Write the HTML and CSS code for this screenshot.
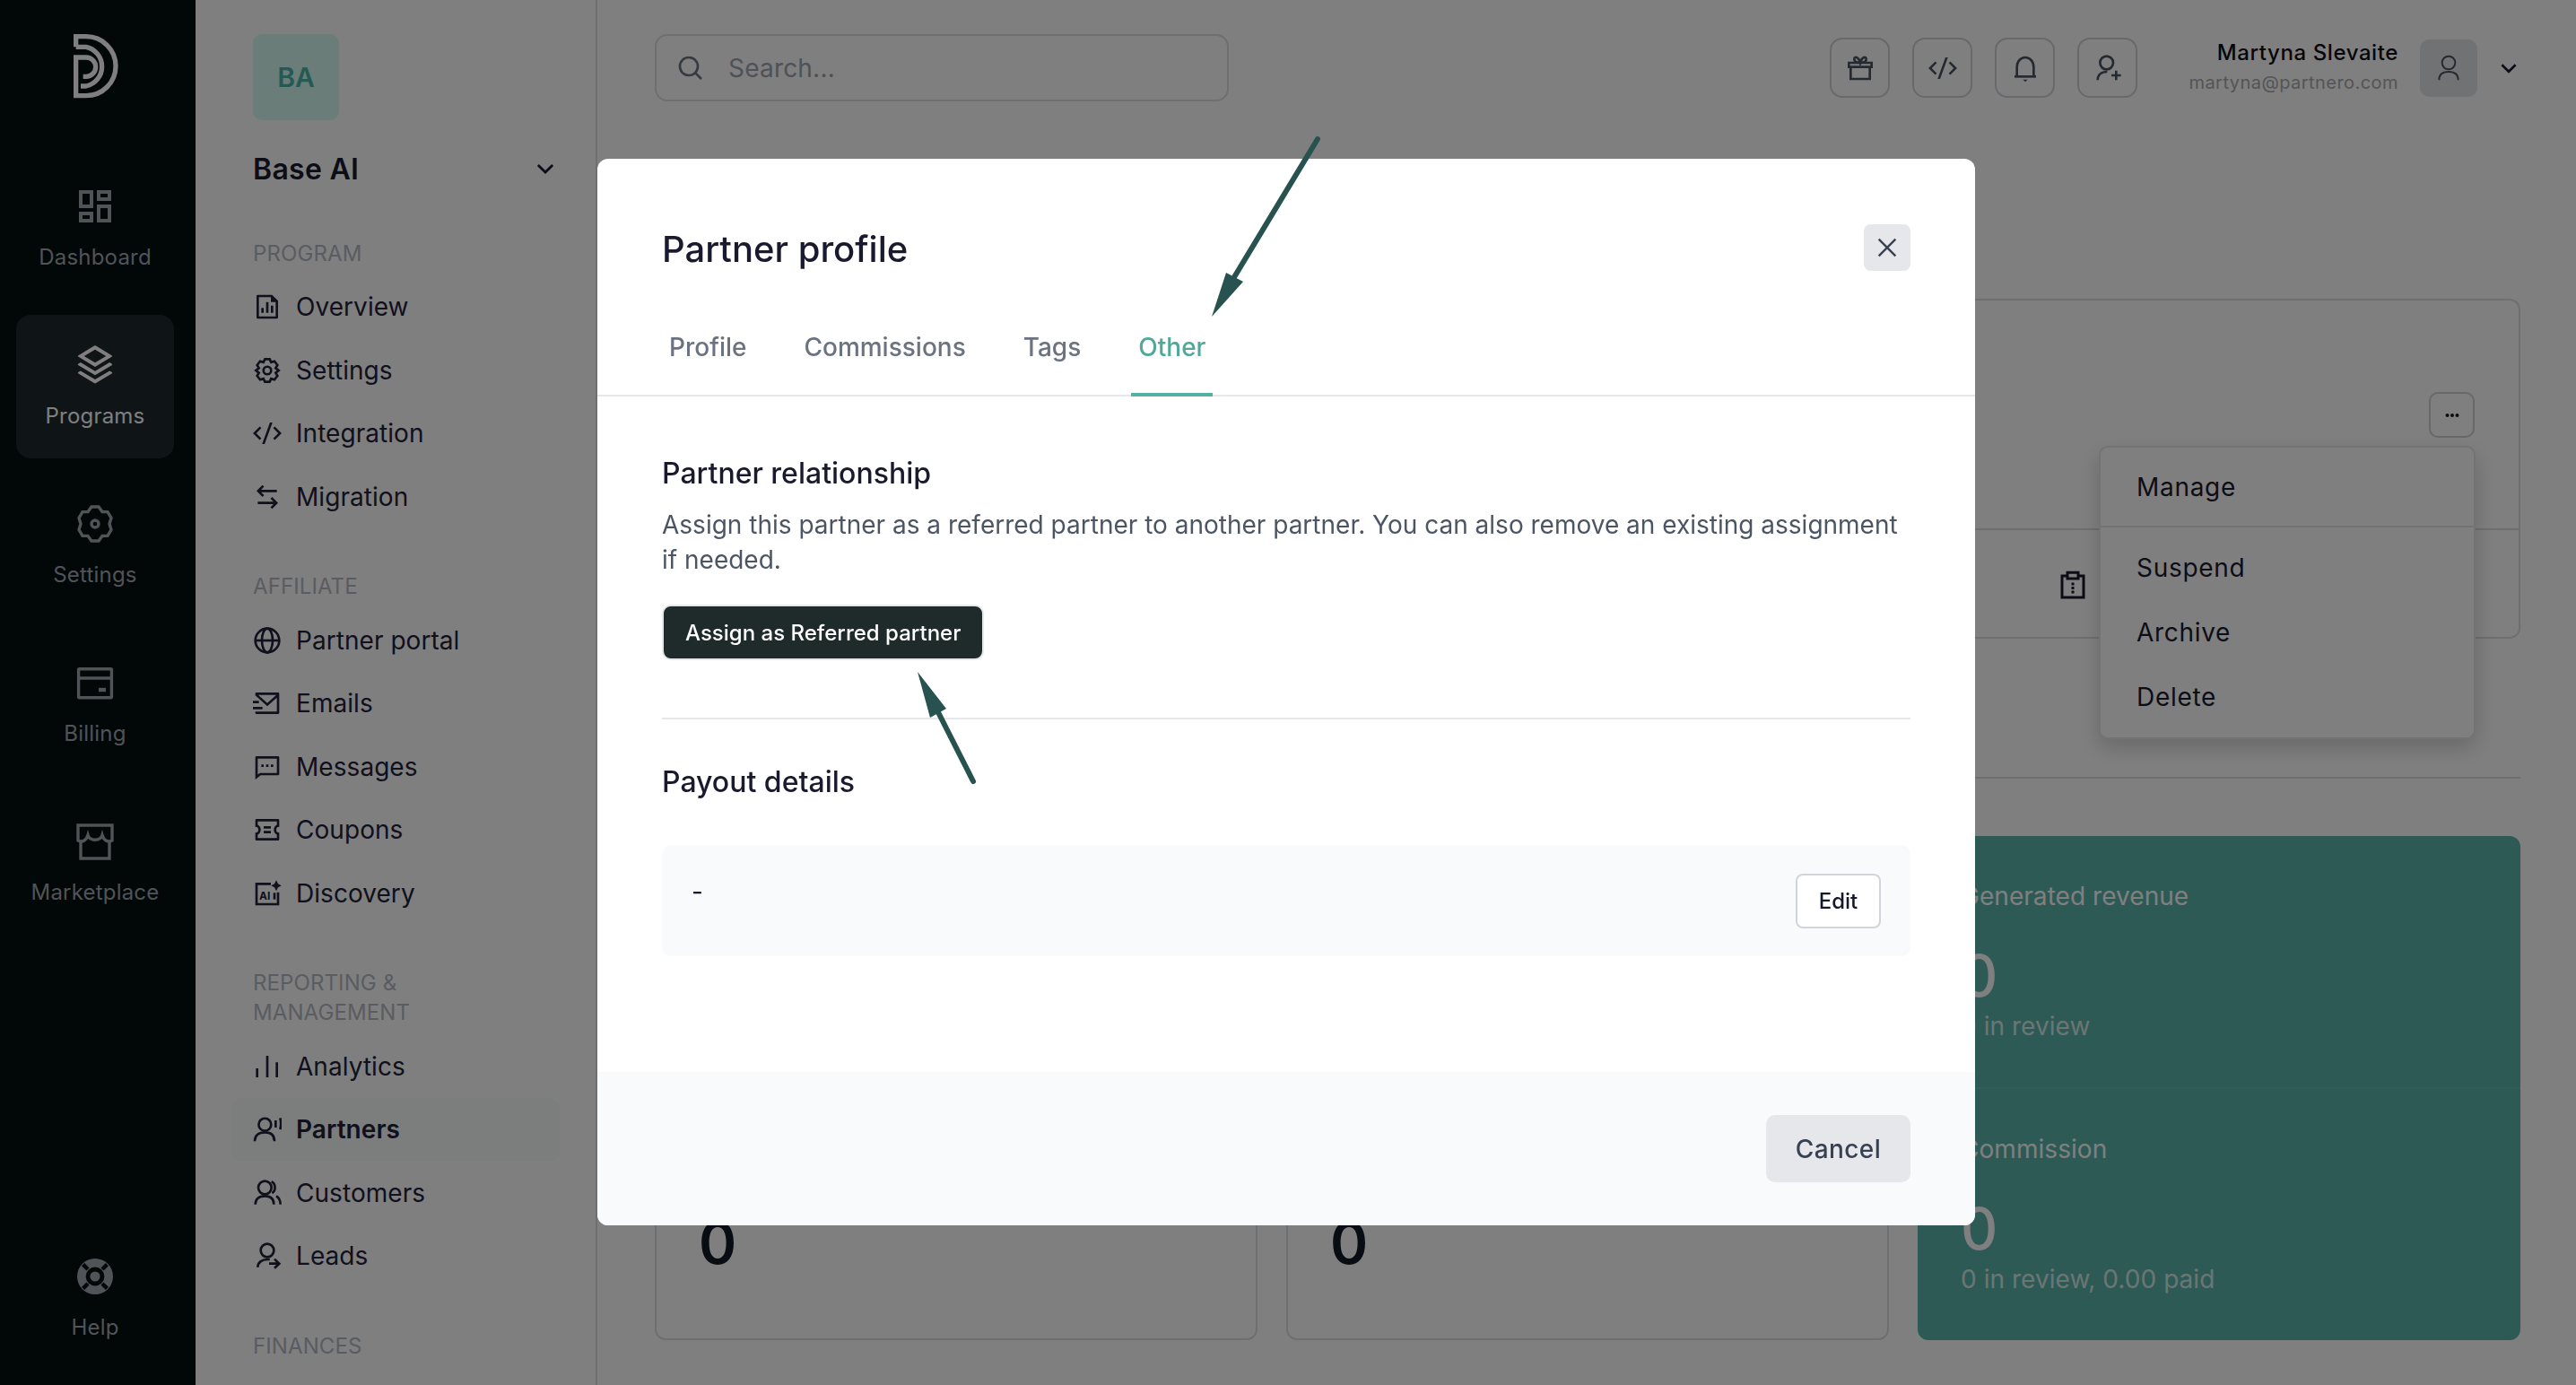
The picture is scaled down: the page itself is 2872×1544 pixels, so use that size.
FILE: index.html
```html
<!DOCTYPE html>
<html lang="en">
<head>
<meta charset="utf-8">
<title>Partner profile</title>
<link rel="stylesheet" href="styles.css">
</head>
<body>
<div class="app">
  <nav class="rail">
    <svg class="logo" viewBox="0 0 300 300"><path d="M74 97V62H108A99 99 0 0 1 108 260H74V132H108A32 32 0 0 1 108 196H98"/><path d="M74 97H108A67 67 0 0 1 108 228H90"/></svg>
    <a class="rail-item">
      <svg class="rail-icon fill" viewBox="0 0 24 24"><path d="M13 21V11h8v10h-8zM3 13V3h8v10H3zm2-2h4V5H5v6zM3 21v-6h8v6H3zm2-2h4v-2H5v2zm10 0h4v-6h-4v6zM13 3h8v6h-8V3zm2 2v2h4V5h-4z" fill-rule="evenodd"/></svg>
      <span>Dashboard</span>
    </a>
    <a class="rail-item active">
      <svg class="rail-icon fill" viewBox="0 0 24 24"><path d="M20.083 15.2l1.202.721a.5.5 0 0 1 0 .858l-8.77 5.262a1 1 0 0 1-1.03 0l-8.77-5.262a.5.5 0 0 1 0-.858l1.202-.721L12 20.05l8.083-4.85zm0-4.7l1.202.721a.5.5 0 0 1 0 .858L12 17.65l-9.285-5.571a.5.5 0 0 1 0-.858l1.202-.721L12 15.35l8.083-4.85zm-7.569-9.191l8.771 5.262a.5.5 0 0 1 0 .858L12 13 2.715 7.429a.5.5 0 0 1 0-.858l8.77-5.262a1 1 0 0 1 1.03 0zM12 3.332L5.887 7 12 10.668 18.113 7 12 3.332z"/></svg>
      <span>Programs</span>
    </a>
    <a class="rail-item">
      <svg class="rail-icon line" viewBox="0 0 24 24"><path d="M10 2.500 14 2.500 16 5.300 19 5.300 21 8.700 20 12 21 15.300 19 18.700 16 18.700 14 21.500H10L8 18.700 5 18.700 3 15.300 4 12 3 8.700 5 5.300 8 5.300Z"/><circle cx="12" cy="12" r="2"/></svg>
      <span>Settings</span>
    </a>
    <a class="rail-item">
      <svg class="rail-icon line" viewBox="0 0 24 24"><rect x="2.800" y="4.400" width="18.400" height="16" rx=".5"/><path d="M2.800 9.500H21.200"/><path class="thick" d="M14 16H18"/></svg>
      <span>Billing</span>
    </a>
    <a class="rail-item">
      <svg class="rail-icon line" viewBox="0 0 24 24"><path d="M4 12V21.500H20V12"/><path d="M2.500 3H21.500V11.500C19.500 12.500 17 12 16 8.500 15 12 9 12 8 8.500 7 12 4.500 12.500 2.500 11.500Z"/></svg>
      <span>Marketplace</span>
    </a>
    <a class="rail-item help">
      <svg class="rail-icon fill" viewBox="0 0 24 24"><circle cx="12" cy="12" r="10"/><circle class="hole" cx="12" cy="12" r="5.200"/><circle cx="12" cy="12" r="2.800"/><path class="notch" d="M5.300 5.300 8 8M18.700 5.300 16 8M5.300 18.700 8 16M18.700 18.700 16 16"/></svg>
      <span>Help</span>
    </a>
  </nav>

  <aside class="sidebar">
    <div class="org-badge">BA</div>
    <div class="org-row">
      <span class="org-name">Base AI</span>
      <svg class="org-chev line" viewBox="0 0 24 24"><path d="M5 8.500 12 15.500 19 8.500"/></svg>
    </div>

    <div class="nav-label first">PROGRAM</div>
    <a class="nav-item"><svg class="nav-icon fill" viewBox="0 0 24 24"><path d="M15 4H5v16h14V8h-4V4zM3 2.992C3 2.444 3.447 2 3.999 2H16l5 5v13.993A1 1 0 0 1 20.007 22H3.993A1 1 0 0 1 3 21.008V2.992zM11 8h2v9h-2V8zm4 3h2v6h-2v-6zm-8 2h2v4H7v-4z"/></svg>Overview</a>
    <a class="nav-item"><svg class="nav-icon line" viewBox="0 0 24 24"><path d="M10 2.500H14L15.200 5.100 18 4.300 20.500 7.500 19 10 21.500 12 19 14 20.500 16.500 18 19.700 15.200 18.900 14 21.500H10L8.800 18.900 6 19.700 3.500 16.500 5 14 2.500 12 5 10 3.500 7.500 6 4.300 8.800 5.100Z"/><circle cx="12" cy="12" r="3.200"/></svg>Settings</a>
    <a class="nav-item"><svg class="nav-icon fill" viewBox="0 0 24 24"><path d="M24 12l-5.657 5.657-1.414-1.414L21.172 12l-4.243-4.243 1.414-1.414L24 12zM2.828 12l4.243 4.243-1.414 1.414L0 12l5.657-5.657L7.070 7.757 2.828 12zm6.960 9H7.660l6.552-18h2.128L9.788 21z"/></svg>Integration</a>
    <a class="nav-item"><svg class="nav-icon fill" viewBox="0 0 24 24"><path d="M16.050 12.050L21 17l-4.950 4.950-1.414-1.414 2.536-2.537L4 18v-2h13.172l-2.536-2.536 1.414-1.414zm-8.100-10l1.414 1.414L6.828 6 20 6v2H6.828l2.536 2.536L7.950 11.950 3 7l4.950-4.950z"/></svg>Migration</a>

    <div class="nav-label">AFFILIATE</div>
    <a class="nav-item"><svg class="nav-icon line" viewBox="0 0 24 24"><circle cx="12" cy="12" r="10"/><ellipse cx="12" cy="12" rx="4.500" ry="10"/><path d="M2 12H22"/></svg>Partner portal</a>
    <a class="nav-item"><svg class="nav-icon fill" viewBox="0 0 24 24"><path d="M22 20.007a1 1 0 0 1-.992.993H2.992A.993.993 0 0 1 2 20.007V19h18V7.300l-8 7.200-10-9V4a1 1 0 0 1 1-1h18a1 1 0 0 1 1 1v16.007zM4.434 5L12 11.810 19.566 5H4.434zM0 15h8v2H0v-2zm0-5h5v2H0v-2z"/></svg>Emails</a>
    <a class="nav-item"><svg class="nav-icon fill" viewBox="0 0 24 24"><path d="M6.455 19L2 22.500V4a1 1 0 0 1 1-1h18a1 1 0 0 1 1 1v14a1 1 0 0 1-1 1H6.455zm-.692-2H20V5H4v13.385L5.763 17zM11 10h2v2h-2v-2zm-4 0h2v2H7v-2zm8 0h2v2h-2v-2z"/></svg>Messages</a>
    <a class="nav-item"><svg class="nav-icon fill" viewBox="0 0 24 24"><path d="M2 9.500V4a1 1 0 0 1 1-1h18a1 1 0 0 1 1 1v5.500a2.500 2.500 0 1 0 0 5V20a1 1 0 0 1-1 1H3a1 1 0 0 1-1-1v-5.500a2.500 2.500 0 1 0 0-5zm2-1.532a4.500 4.500 0 0 1 0 8.064V19h16v-2.968a4.500 4.500 0 0 1 0-8.064V5H4v2.968zM9 9h6v2H9V9zm0 4h6v2H9v-2z"/></svg>Coupons</a>
    <a class="nav-item"><svg class="nav-icon line" viewBox="0 0 24 24"><path d="M15 4H3V21H21V11"/><path class="solid" d="M19.500 1 21 4 23.800 5.500 21 7 19.500 10 18 7 15.200 5.500 18 4Z"/><text class="ai-glyph" x="5.200" y="17.200">AI</text><path d="M18 11.500V17"/></svg>Discovery</a>

    <div class="nav-label">REPORTING &amp; MANAGEMENT</div>
    <a class="nav-item"><svg class="nav-icon line" viewBox="0 0 24 24"><path d="M3.500 21V13.500M12 21V3M20 21V8.500"/></svg>Analytics</a>
    <a class="nav-item current"><svg class="nav-icon line" viewBox="0 0 24 24"><circle cx="10" cy="8" r="5.200"/><path d="M1.500 22C1.500 17 5 14.500 10 14.500 15 14.500 18 17 18 22"/><path d="M19 4.500V10.500M22.700 2.500C23.600 5.500 23.600 9 22.700 12"/></svg>Partners</a>
    <a class="nav-item"><svg class="nav-icon line" viewBox="0 0 24 24"><circle cx="10" cy="7.500" r="5.500"/><path d="M2 21.500C2 17 5 14.500 10 14.500 15 14.500 17.500 17 17.500 21.500"/><path d="M15.500 2.500C19 4 19.500 10 16 12M19.500 14.500C22 16 23 18.500 23 21.500"/></svg>Customers</a>
    <a class="nav-item"><svg class="nav-icon line" viewBox="0 0 24 24"><circle cx="12" cy="7.500" r="5.500"/><path d="M4 21.500C4 17.500 7.500 15 12 15H14"/><path d="M13.500 18.500H21.500M18 14.700 22 18.500 18 22.300"/></svg>Leads</a>

    <div class="nav-label">FINANCES</div>
  </aside>

  <main class="main">
    <header class="topbar">
      <div class="search">
        <svg class="search-icon line" viewBox="0 0 24 24"><circle cx="10.500" cy="10.500" r="7.500"/><path d="M16 16 21 21"/></svg>
        <span>Search...</span>
      </div>
      <div class="actions">
        <button class="act"><svg class="act-icon line" viewBox="0 0 24 24"><path d="M4 11V21H20V11"/><path d="M2.500 7.500H21.500V11H2.500Z"/><path d="M12 7.500C9 7.500 7 6.500 7 4.500 7 2 10.500 2 12 7.500 13.500 2 17 2 17 4.500 17 6.500 15 7.500 12 7.500Z"/></svg></button>
        <button class="act"><svg class="act-icon fill" viewBox="0 0 24 24"><path d="M24 12l-5.657 5.657-1.414-1.414L21.172 12l-4.243-4.243 1.414-1.414L24 12zM2.828 12l4.243 4.243-1.414 1.414L0 12l5.657-5.657L7.070 7.757 2.828 12zm6.960 9H7.660l6.552-18h2.128L9.788 21z"/></svg></button>
        <button class="act"><svg class="act-icon line" viewBox="0 0 24 24"><path d="M3 19H21"/><path d="M5 19V11C5 6.500 8 3 12 3 16 3 19 6.500 19 11V19"/><path class="solid" d="M10 21.500H14L12 23.500Z"/></svg></button>
        <button class="act"><svg class="act-icon line" viewBox="0 0 24 24"><circle cx="11" cy="7.500" r="5.500"/><path d="M3.500 22C3.500 17.500 6.500 15 11.500 15"/><path d="M19 14V22M15 18H23"/></svg></button>
      </div>
      <div class="user">
        <div class="user-text">
          <div class="user-name">Martyna Slevaite</div>
          <div class="user-mail">martyna@partnero.com</div>
        </div>
        <div class="avatar"><svg class="avatar-icon line" viewBox="0 0 24 24"><circle cx="12" cy="7.500" r="5.500"/><path d="M4 22C4 17 7.500 15 12 15 16.500 15 20 17 20 22"/></svg></div>
        <svg class="user-chev line" viewBox="0 0 24 24"><path d="M5 8.500 12 15.500 19 8.500"/></svg>
      </div>
    </header>

    <section class="panel">
      <div class="panel-top">
        <button class="more"><svg class="more-icon" viewBox="0 0 24 24"><circle cx="6" cy="12" r="2.200"/><circle cx="12" cy="12" r="2.200"/><circle cx="18" cy="12" r="2.200"/></svg></button>
      </div>
      <div class="panel-bottom">
        <svg class="clip-icon fill" viewBox="0 0 24 24"><path d="M7 2.500H17V5H21V23H3V5H7V2.500ZM9 4.500V7H15V4.500H9ZM7 7H5V21H19V7H17V9H7V7ZM11 11H13V13H11V11ZM11 14H13V16H11V14ZM11 17H13V19H11V17Z" fill-rule="evenodd"/></svg>
      </div>
      <div class="menu">
        <div class="menu-head">Manage</div>
        <div class="menu-item">Suspend</div>
        <div class="menu-item">Archive</div>
        <div class="menu-item">Delete</div>
      </div>
    </section>

    <hr class="rule">

    <section class="stats">
      <div class="stat-card low"><div class="stat-label"></div><div class="stat-value">0</div></div>
      <div class="stat-card low"><div class="stat-label"></div><div class="stat-value">0</div></div>
      <div class="stat-green">
        <div class="green-part">
          <div class="stat-label">Generated revenue</div>
          <div class="stat-value">0</div>
          <div class="stat-sub">0 in review</div>
        </div>
        <div class="green-part second">
          <div class="stat-label">Commission</div>
          <div class="stat-value">0</div>
          <div class="stat-sub">0 in review, 0.00 paid</div>
        </div>
      </div>
    </section>
  </main>
</div>

<div class="overlay"></div>

<div class="modal">
  <div class="modal-head">
    <h2 class="modal-title">Partner profile</h2>
    <button class="close"><svg class="close-icon line" viewBox="0 0 24 24"><path d="M5 5 19 19M19 5 5 19"/></svg></button>
  </div>
  <div class="tabs">
    <a class="tab">Profile</a>
    <a class="tab">Commissions</a>
    <a class="tab">Tags</a>
    <a class="tab on">Other</a>
  </div>
  <div class="modal-body">
    <h3 class="sec-title">Partner relationship</h3>
    <p class="sec-text">Assign this partner as a referred partner to another partner. You can also remove an existing assignment if needed.</p>
    <button class="assign">Assign as Referred partner</button>
    <hr class="sec-rule">
    <h3 class="sec-title">Payout details</h3>
    <div class="payout">
      <span class="payout-val">-</span>
      <button class="edit">Edit</button>
    </div>
  </div>
  <div class="modal-foot">
    <button class="cancel">Cancel</button>
  </div>
</div>

<svg class="arrows" viewBox="0 0 2872 1544">
  <path class="arrow-line" d="M1469 155 1376 309"/>
  <path class="arrow-head" d="M1351 353 1367 304 1386 314Z"/>
  <path class="arrow-line" d="M1085 871 1046 794"/>
  <path class="arrow-head" d="M1023 749 1055 790 1037 800Z"/>
</svg>
</body>
</html>
```
FILE: styles.css
```css
* { box-sizing: border-box; }
html, body { margin: 0; height: 1544px; overflow: hidden; }
body { font-family: Inter, "Liberation Sans", sans-serif; background: #fff; color: #1a1a2e; }
button { font-family: inherit; cursor: pointer; }
h2, h3, p { margin: 0; }

.line { fill: none; stroke: currentColor; stroke-width: 2; }
.fill { fill: currentColor; }
.line .solid { fill: currentColor; stroke: none; }

.app { display: flex; height: 1544px; }

/* rail */
.rail { width: 218px; flex: none; background: #040e10; display: flex; flex-direction: column; padding: 20px 24px 17px 18px; color: #a0a6ae; }
.logo { width: 100px; height: 100px; fill: none; stroke: #fff; stroke-width: 16; margin: 0 0 54px 42px; flex: none; }
.rail-item { width: 176px; height: 160px; margin-bottom: 17px; border-radius: 16px; display: flex; flex-direction: column; align-items: center; font-size: 24px; line-height: 32px; padding-top: 32px; letter-spacing: .2px; flex: none; }
.rail-item.active { background: #1e282c; color: #fff; }
.rail-item.help { margin-top: auto; margin-bottom: 0; }
.rail-icon { width: 48px; height: 48px; margin-bottom: 17px; flex: none; }
.rail-icon.line { stroke-width: 1.700; }
.rail-icon .thick { stroke-width: 2.200; }
.rail-icon .hole { fill: #040e10; }
.rail-icon .notch { stroke: #040e10; stroke-width: 2.200; fill: none; }

/* sidebar */
.sidebar { width: 448px; flex: none; border-right: 2px solid #dcdee2; padding: 38px 40px 0 64px; overflow: hidden; }
.org-badge { width: 96px; height: 96px; border-radius: 10px; background: #d6faf0; color: #4ab4a8; font-weight: 600; font-size: 30px; display: flex; align-items: center; justify-content: center; }
.org-row { display: flex; align-items: center; justify-content: space-between; height: 44px; margin-top: 32px; padding-right: 2px; }
.org-name { font-size: 32px; font-weight: 600; letter-spacing: .3px; }
.org-chev { width: 28px; height: 28px; stroke-width: 2.400; }
.nav-label { font-size: 24px; line-height: 33px; color: #b4b8c4; margin-top: 48px; margin-bottom: 8px; letter-spacing: .1px; max-width: 300px; }
.nav-label.first { margin-top: 56px; }
.nav-item { display: flex; align-items: center; gap: 16px; height: 70.600px; font-size: 28px; letter-spacing: .05px; color: #22223a; margin-left: -24px; padding-left: 24px; border-radius: 12px; }
.nav-item.current { background: #f9fafa; font-weight: 600; }
.nav-icon { width: 32px; height: 32px; flex: none; }

/* main */
.main { flex: 1; min-width: 0; padding: 38px 62px 0 64px; }
.topbar { display: flex; align-items: center; height: 75px; }
.search { flex: none; width: 640px; height: 75px; border: 2px solid #dcdee2; border-radius: 14px; display: flex; align-items: center; gap: 26px; padding-left: 22px; font-size: 28px; letter-spacing: .2px; color: #9ca3af; }
.search-icon { width: 32px; height: 32px; color: #6b7280; }
.actions { display: flex; gap: 25px; margin-left: 670px; flex: none; }
.act { width: 67px; height: 67px; background: none; border: 2px solid #cfd2d8; border-radius: 14px; padding: 0; display: flex; align-items: center; justify-content: center; color: #4b5563; }
.act-icon { width: 32px; height: 32px; }
.user { display: flex; align-items: center; margin-left: auto; }
.user-text { text-align: right; padding-top: 1px; }
.user-name { font-size: 24px; font-weight: 500; line-height: 32px; letter-spacing: .6px; color: #0d0d14; }
.user-mail { font-size: 20px; line-height: 34px; letter-spacing: .45px; color: #a9a9ad; }
.avatar { width: 64px; height: 64px; border-radius: 10px; background: #e2e4e8; margin-left: 24px; display: flex; align-items: center; justify-content: center; color: #4b5563; }
.avatar-icon { width: 32px; height: 32px; stroke-width: 1.500; }
.user-chev { width: 26px; height: 26px; margin-left: 22px; color: #1a1a2e; stroke-width: 2.400; }

.panel { position: relative; margin-top: 220px; height: 379px; border: 2px solid #dcdee2; border-radius: 12px; display: flex; flex-direction: column; }
.panel-top { height: 256px; border-bottom: 2px solid #dcdee2; display: flex; justify-content: flex-end; align-items: flex-start; padding: 102px 49px 0 0; }
.more { width: 51px; height: 51px; background: none; border: 2px solid #cdd0d6; border-radius: 10px; padding: 0; display: flex; align-items: center; justify-content: center; }
.more-icon { width: 22px; height: 22px; fill: #1a1a2e; }
.panel-bottom { flex: 1; display: flex; justify-content: flex-end; align-items: center; padding-right: 479px; }
.clip-icon { width: 36px; height: 36px; color: #1a1a2e; }
.menu { position: absolute; top: 162px; right: 48px; width: 420px; height: 327px; background: #fff; border: 2px solid #e5e7eb; border-radius: 10px; box-shadow: 0 10px 24px rgba(0,0,0,.18); font-size: 28px; letter-spacing: .7px; color: #1a1a2e; }
.menu-head { height: 89px; display: flex; align-items: center; padding-left: 40px; border-bottom: 2px solid #e5e7eb; margin-bottom: 9px; }
.menu-item { height: 72px; display: flex; align-items: center; padding-left: 40px; }

.rule { border: 0; border-top: 2px solid #dcdee2; margin: 154px 0 64px; }

.stats { display: grid; grid-template-columns: repeat(3, 1fr); grid-template-rows: 266px 264px; gap: 32px; }
.stat-card { border: 2px solid #dcdee2; border-radius: 12px; padding: 46px 47px; }
.stat-card.low { grid-row: 2; }
.stat-card .stat-value { font-weight: 600; color: #111827; }
.stat-label { font-size: 28px; line-height: 38px; min-height: 38px; letter-spacing: .05px; }
.stat-value { font-size: 64px; line-height: 72px; margin-top: 34px; font-weight: 500; color: #1a1a2e; }
.stat-sub { font-size: 28px; line-height: 38px; margin-top: 1px; letter-spacing: .05px; opacity: .75; }
.stat-green { grid-column: 3; grid-row: 1 / 3; background: #5ab4aa; border-radius: 12px; color: #fff; }
.stat-green .stat-value { color: #fff; }
.green-part { height: 280px; padding: 48px 48px 0; }
.green-part.second { height: 282px; border-top: 2px solid #65bdb3; }

/* overlay */
.overlay { position: fixed; inset: 0; background: rgba(0,0,0,.5); }

/* modal */
.modal { position: fixed; left: 666px; top: 177px; width: 1536px; height: 1189px; background: #fff; border-radius: 12px; overflow: hidden; display: flex; flex-direction: column; color: #111827; }
.modal-head { display: flex; align-items: flex-start; justify-content: space-between; padding: 73px 72px 0; }
.modal-title { font-size: 40px; font-weight: 500; line-height: 52px; padding-top: 2px; color: #1a1a2e; }
.close { width: 52px; height: 52px; border: 0; border-radius: 8px; background: #e5e7eb; padding: 0; display: flex; align-items: center; justify-content: center; color: #374151; }
.close-icon { width: 32px; height: 32px; stroke-width: 1.800; }
.tabs { display: flex; gap: 48px; padding-left: 72px; margin-top: 32px; border-bottom: 2px solid #e5e7eb; }
.tab { height: 106px; margin-bottom: -2px; padding: 0 8px; border-bottom: 4px solid transparent; display: flex; align-items: center; font-size: 28px; color: #6b7280; font-weight: 500; }
.tab.on { color: #4fa898; border-bottom-color: #52b3a3; }
.modal-body { padding: 64px 72px 0; }
.sec-title { font-size: 32px; font-weight: 500; line-height: 44px; color: #1a1a2e; }
.sec-text { margin-top: 16px; font-size: 28px; line-height: 39px; color: #4b5563; }
.assign { display: block; margin-top: 30px; height: 62px; padding: 0 24px; background: #1f2a2b; color: #fff; border: 2px solid #e5e7eb; border-radius: 10px; font-size: 24px; font-weight: 500; }
.sec-rule { border: 0; border-top: 2px solid #e5e7eb; margin: 64px 0 48px; }
.payout { margin-top: 48px; height: 124px; background: #f9fafb; border-radius: 10px; display: flex; justify-content: space-between; align-items: flex-start; padding: 32px 33px; }
.payout-val { font-size: 28px; line-height: 40px; color: #1a1a2e; }
.edit { height: 61px; width: 95px; background: #fff; border: 2px solid #d1d5db; border-radius: 8px; font-size: 24px; font-weight: 500; color: #111827; padding: 0; }
.modal-foot { margin-top: auto; background: #f9fafb; padding: 48px 72px; display: flex; justify-content: flex-end; }
.cancel { width: 161px; height: 75px; border: 0; border-radius: 10px; background: #e5e7eb; color: #374151; font-size: 28px; font-weight: 500; letter-spacing: .4px; }

/* annotations */
.arrows { position: fixed; left: 0; top: 0; width: 2872px; height: 1544px; pointer-events: none; }
.arrow-line { stroke: #275250; stroke-width: 6; stroke-linecap: round; fill: none; }
.arrow-head { fill: #275250; }
.ai-glyph { font-family: Inter, "Liberation Sans", sans-serif; font-size: 9px; font-weight: 700; fill: currentColor; stroke: none; }
```
